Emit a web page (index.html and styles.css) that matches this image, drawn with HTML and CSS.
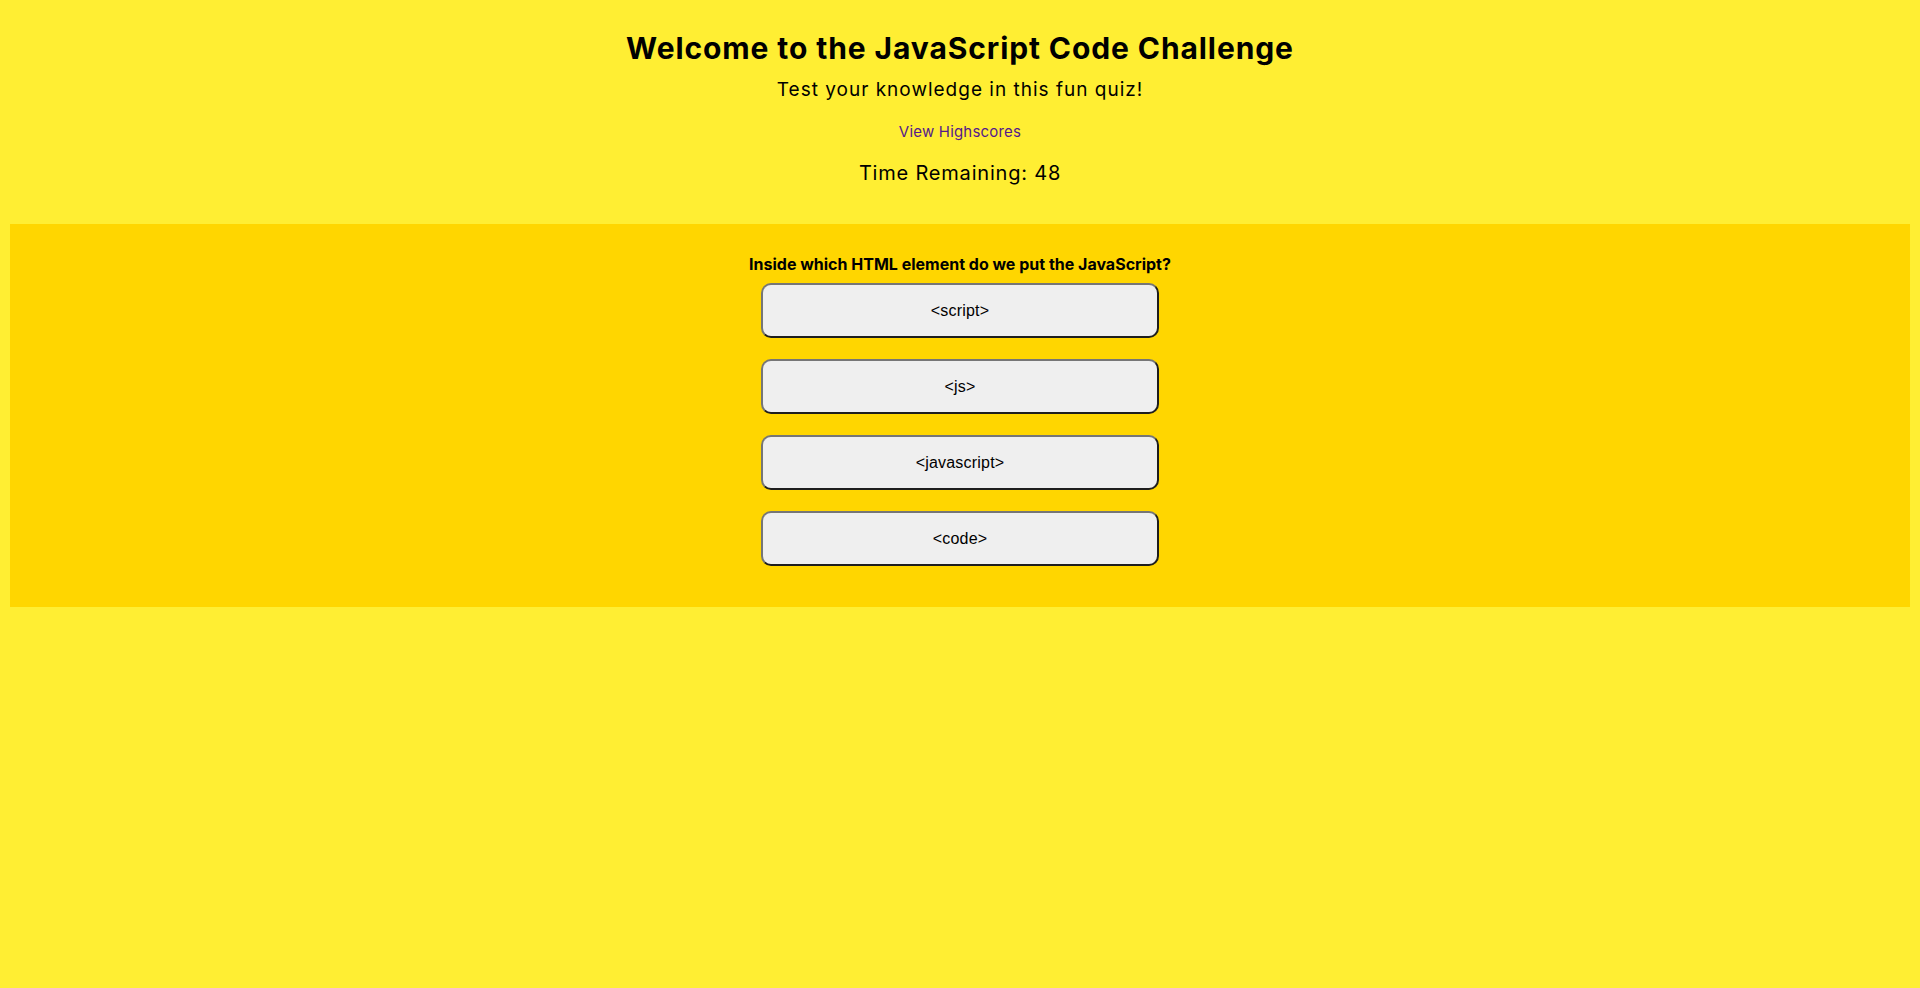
FILE: index.html
```html
<!DOCTYPE html>
<html lang="en">
<head>
<meta charset="utf-8">
<title>JavaScript Code Challenge</title>
<link rel="stylesheet" href="styles.css">
</head>
<body>
<header class="intro">
  <h1 class="title">Welcome to the JavaScript Code Challenge</h1>
  <p class="subtitle">Test your knowledge in this fun quiz!</p>
  <a class="scores-link" href="#highscores">View Highscores</a>
  <p class="timer">Time Remaining: 48</p>
</header>
<main class="quiz">
  <h2 class="question">Inside which HTML element do we put the JavaScript?</h2>
  <div class="answers">
    <button class="answer" type="button">&lt;script&gt;</button>
    <button class="answer" type="button">&lt;js&gt;</button>
    <button class="answer" type="button">&lt;javascript&gt;</button>
    <button class="answer" type="button">&lt;code&gt;</button>
  </div>
</main>
</body>
</html>
```
FILE: styles.css
```css
html, body {
  margin: 0;
  padding: 0;
}

body {
  background: #ffee33;
  font-family: Inter, "Liberation Sans", sans-serif;
  color: #000;
  min-height: 988px;
}

.intro {
  display: flex;
  flex-direction: column;
  align-items: center;
  padding-top: 28px;
  text-align: center;
}

.title {
  margin: 0;
  font-size: 30px;
  line-height: 40px;
  font-weight: 700;
  letter-spacing: 0.9px;
}

.subtitle {
  margin: 10px 0 0;
  font-size: 19px;
  line-height: 24px;
  font-weight: 400;
  letter-spacing: 1px;
}

.scores-link {
  margin-top: 20px;
  font-size: 15px;
  line-height: 20px;
  color: #551a8b;
  text-decoration: none;
  letter-spacing: 0.2px;
}

.timer {
  margin: 17px 0 0;
  font-size: 20px;
  line-height: 28px;
  letter-spacing: 0.8px;
}

.quiz {
  margin: 37px 10px 0;
  background: #ffd600;
  padding: 30px 0 41px;
  display: flex;
  flex-direction: column;
  align-items: center;
}

.question {
  margin: 0;
  font-size: 16px;
  line-height: 20px;
  font-weight: 700;
}

.answers {
  margin-top: 9px;
  display: flex;
  flex-direction: column;
  gap: 21px;
}

.answer {
  width: 398px;
  height: 55px;
  box-sizing: border-box;
  background: #efefef;
  border: 2px solid;
  border-color: #767676 #1e1e1e #1e1e1e #767676;
  border-radius: 10px;
  font-family: "Liberation Sans", Arial, sans-serif;
  font-size: 16px;
  letter-spacing: 0.2px;
  color: #000;
  padding: 1px 0 0;
}
```
